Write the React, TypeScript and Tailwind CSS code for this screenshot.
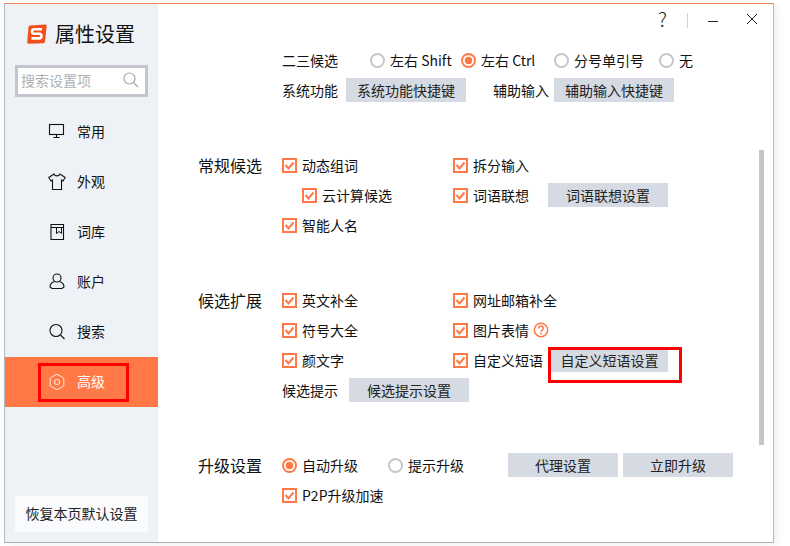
import React from "react";

const Check = ({ label, children }: { label?: string; children?: React.ReactNode }) => (
  <span className="flex items-center">
    <svg width="15" height="15" viewBox="0 0 15 15" className="mr-[5px] shrink-0">
      <rect x="1" y="1" width="13" height="13" fill="#fff" stroke="#ff7846" strokeWidth="2" />
      <path d="M3.5 7 L6.5 10.5 L11.5 4.5" fill="none" stroke="#ff7846" strokeWidth="2" />
    </svg>
    {label}
    {children}
  </span>
);

const Radio = ({ label, on, className }: { label: string; on?: boolean; className?: string }) => (
  <span className={"flex items-center " + (className || "")}>
    <svg width="15" height="15" viewBox="0 0 15 15" className="mr-[5px] shrink-0">
      <circle cx="7.5" cy="7.5" r="6.5" fill="#fff" stroke={on ? "#ff7846" : "#c3c6cc"} strokeWidth="2" />
      {on && <circle cx="7.5" cy="7.5" r="3.7" fill="#ff7846" />}
    </svg>
    {label}
  </span>
);

const Btn = ({ label, className }: { label: string; className: string }) => (
  <span className={"flex h-6 items-center justify-center bg-[#d6dbe3] text-[#222] " + className}>{label}</span>
);

const Row = ({ children }: { children: React.ReactNode }) => (
  <div className="flex h-[30px] items-center">{children}</div>
);

const Cell = ({ children }: { children: React.ReactNode }) => <div className="w-[171px]">{children}</div>;

const Section = ({ title, className, children }: { title: string; className: string; children: React.ReactNode }) => (
  <div className={"flex pl-10 " + className}>
    <div className="flex h-[30px] w-[84px] shrink-0 items-center text-base">{title}</div>
    <div>{children}</div>
  </div>
);

const s = { stroke: "currentColor", fill: "none", strokeWidth: 1.1 };

const icons: Record<string, React.ReactNode> = {
  常用: (
    <g {...s}>
      <rect x="1.5" y="1.5" width="14" height="10" />
      <path d="M8.5 11.5V14.5M5.5 14.5H11.5" />
    </g>
  ),
  外观: (
    <g {...s}>
      <path d="M6 1 L0.8 4.5 L3 8 L4.5 7 V16.5 H13.5 V7 L15 8 L17.2 4.5 L12 1 C11 3.5 7 3.5 6 1Z" />
    </g>
  ),
  词库: (
    <g {...s}>
      <path d="M3 1.5H15.5V16.5H3Z" />
      <path d="M3 4.5H15.5M8.5 4.5V10.5L11 8.5L13.5 10.5V4.5" strokeWidth="1" />
    </g>
  ),
  账户: (
    <g {...s}>
      <circle cx="9" cy="5" r="4" />
      <path d="M6.5 8.5 C3.5 9.5 2 11.5 2 14 L4 15.5 H14 L16 14 C16 11.5 14.5 9.5 11.5 8.5" />
    </g>
  ),
  搜索: (
    <g {...s}>
      <circle cx="8" cy="7.5" r="6" />
      <path d="M12.5 12L16.5 16" />
    </g>
  ),
  高级: (
    <g stroke="#ffe9df" fill="none" strokeWidth="1">
      <path d="M9 1.2L15.8 5V13L9 16.8L2.2 13V5Z" strokeLinejoin="round" />
      <circle cx="9" cy="9" r="2.6" />
    </g>
  ),
};

const nav = ["常用", "外观", "词库", "账户", "搜索", "高级"];

export default function App() {
  return (
    <div className="relative h-[546px] w-[790px] overflow-hidden bg-white font-['Noto_Sans_CJK_SC','Noto_Sans',sans-serif] text-sm leading-none text-[#111]">
      <div className="relative ml-1 mt-[3px] flex h-[540px] w-[770px] border border-l-[#b4bac2] border-r-[#b4bac2] border-b-[#aeb2b8] border-t-[#f08058] shadow-[4px_2px_6px_rgba(0,0,0,0.06)]">
        <aside className="flex w-[153px] shrink-0 flex-col bg-[#eef1f6]">
          <div className="flex h-[57px] items-end pb-[13px] pl-[22px]">
            <svg width="20" height="20" viewBox="0 0 20 20" className="mb-[4px] mr-[8px]">
              <path d="M3 1.5 L18.5 0.5 Q20 0.5 19.7 2 L18 17.5 Q17.8 19 16.5 19.2 L1.5 19.8 Q0 19.8 0.2 18 L1.5 3 Q1.6 1.6 3 1.5Z" fill="#f0501e" />
              <path d="M15 5.2 H7.5 Q5 5.2 5 7.5 Q5 9.8 7.5 9.8 H12.5 Q14.5 9.8 14.5 12 Q14.5 14.4 12 14.4 H4.5" fill="none" stroke="#fff" strokeWidth="2.6" />
            </svg>
            <span className="text-xl">属性设置</span>
          </div>
          <div className="ml-[10px] mt-1 flex h-8 w-[133px] items-center justify-between border-[3px] border-[#c3c6cc] bg-white pl-[3px] pr-[6px] text-[#b0b0b0]">
            <span className="pb-[3px]">搜索设置项</span>
            <svg width="16" height="16" viewBox="0 0 16 16" fill="none" stroke="#a8a8a8" strokeWidth="1.2" className="mb-[2px]">
              <circle cx="6.5" cy="6.5" r="5.5" />
              <path d="M10.5 10.5L15 15" />
            </svg>
          </div>
          <nav className="mt-[10px] flex flex-col">
            {nav.map((n) => (
              <div
                key={n}
                className={"flex h-[50px] items-center pl-[43px] " + (n === "高级" ? "bg-[#ff7846] text-white" : "text-[#111]")}
              >
                <svg width="18" height="18" viewBox="0 0 18 18" className="mr-[11px]">
                  {icons[n]}
                </svg>
                <span className="pb-[2px]">{n}</span>
              </div>
            ))}
          </nav>
          <div className="mb-[10px] ml-[10px] mt-auto flex h-9 w-[133px] items-center justify-center bg-[#fafbfc] pb-[2px] text-[#222]">
            恢复本页默认设置
          </div>
        </aside>

        <main className="flex-1 pt-[41px]">
          <Section title="" className="">
            <Row>
              <span className="w-[88px]">二三候选</span>
              <Radio label="左右 Shift" className="w-[91px]" />
              <Radio label="左右 Ctrl" on className="w-[93px]" />
              <Radio label="分号单引号" className="w-[105px]" />
              <Radio label="无" />
            </Row>
            <Row>
              <span className="w-[64px]">系统功能</span>
              <Btn label="系统功能快捷键" className="w-[120px]" />
              <span className="ml-[27px] w-[61px]">辅助输入</span>
              <Btn label="辅助输入快捷键" className="w-[120px]" />
            </Row>
          </Section>

          <Section title="常规候选" className="mt-[45px]">
            <Row>
              <Cell><Check label="动态组词" /></Cell>
              <Check label="拆分输入" />
            </Row>
            <Row>
              <Cell><span className="ml-[20px] block"><Check label="云计算候选" /></span></Cell>
              <Check label="词语联想" />
              <Btn label="词语联想设置" className="ml-[19px] w-[120px]" />
            </Row>
            <Row><Check label="智能人名" /></Row>
          </Section>

          <Section title="候选扩展" className="mt-[45px]">
            <Row>
              <Cell><Check label="英文补全" /></Cell>
              <Check label="网址邮箱补全" />
            </Row>
            <Row>
              <Cell><Check label="符号大全" /></Cell>
              <Check label="图片表情">
                <svg width="16" height="16" viewBox="0 0 16 16" className="ml-[4px]" fill="none" stroke="#ff7846" strokeWidth="1.5">
                  <circle cx="8" cy="8" r="6.7" />
                  <path d="M5.6 6.4 C5.6 3.4 10.4 3.4 10.4 6.2 C10.4 8 8 7.8 8 9.8" />
                  <path d="M8 10.8V12.4" />
                </svg>
              </Check>
            </Row>
            <Row>
              <Cell><Check label="颜文字" /></Cell>
              <Check label="自定义短语" />
              <Btn label="自定义短语设置" className="ml-[8px] h-[23px] w-[117px]" />
            </Row>
            <Row>
              <span className="w-[67px]">候选提示</span>
              <Btn label="候选提示设置" className="w-[120px]" />
            </Row>
          </Section>

          <Section title="升级设置" className="mt-[45px]">
            <Row>
              <Radio label="自动升级" on className="w-[106px]" />
              <Radio label="提示升级" className="w-[120px]" />
              <Btn label="代理设置" className="w-[110px]" />
              <Btn label="立即升级" className="ml-[5px] w-[110px]" />
            </Row>
            <Row><Check label="P2P升级加速" /></Row>
          </Section>
        </main>

        {/* overlays: window controls, scrollbar, annotation boxes */}
        <span className="absolute left-[653px] top-px text-xl font-light text-[#222]">?</span>
        <span className="absolute left-[682px] top-[9px] h-[15px] w-px bg-[#d0d0d0]" />
        <span className="absolute left-[703px] top-[17px] h-px w-[10px] bg-[#222]" />
        <svg className="absolute left-[741px] top-[9px]" width="12" height="12" viewBox="0 0 12 12" stroke="#222" strokeWidth="1">
          <path d="M1 1L11 11M11 1L1 11" />
        </svg>
        <span className="absolute left-[754px] top-[146px] h-[295px] w-[5px] bg-[#c3c6cc]" />
        <span className="absolute left-[33px] top-[359px] h-[39px] w-[91px] border-[3px] border-[#ff0000]" />
        <span className="absolute left-[543px] top-[343px] h-9 w-[134px] border-[3px] border-[#ff0000]" />
      </div>
    </div>
  );
}
